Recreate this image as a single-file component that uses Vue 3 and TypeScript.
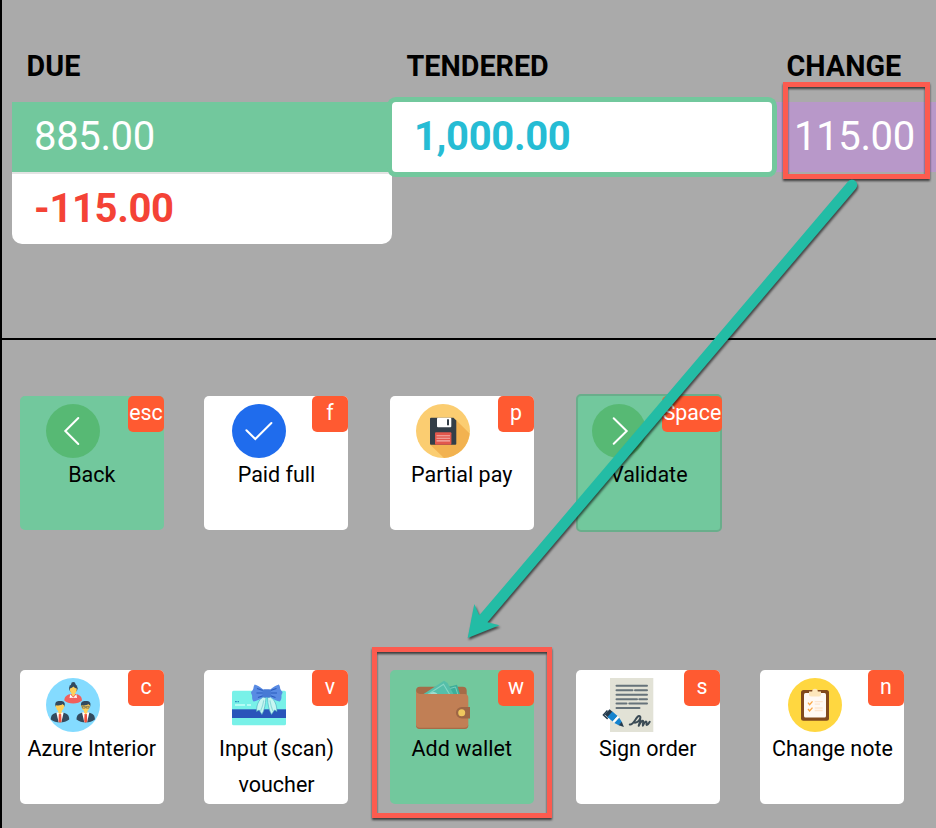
<script setup lang="ts">
type Icon = 'back' | 'check' | 'floppy' | 'next' | 'people' | 'voucher' | 'wallet' | 'sign' | 'note'

interface Action {
  label: string
  hotkey: string
  icon: Icon
  green?: boolean
  focused?: boolean
  shifted?: boolean
}

const rows: Action[][] = [
  [
    { label: 'Back', hotkey: 'esc', icon: 'back', green: true },
    { label: 'Paid full', hotkey: 'f', icon: 'check', shifted: true },
    { label: 'Partial pay', hotkey: 'p', icon: 'floppy' },
    { label: 'Validate', hotkey: 'Space', icon: 'next', green: true, focused: true },
  ],
  [
    { label: 'Azure Interior', hotkey: 'c', icon: 'people' },
    { label: 'Input (scan) voucher', hotkey: 'v', icon: 'voucher', shifted: true },
    { label: 'Add wallet', hotkey: 'w', icon: 'wallet', green: true },
    { label: 'Sign order', hotkey: 's', icon: 'sign' },
    { label: 'Change note', hotkey: 'n', icon: 'note', shifted: true },
  ],
]
</script>

<template>
  <main class="screen">
    <section class="summary">
      <div class="col">
        <h2>DUE</h2>
        <div class="cell due">885.00</div>
        <div class="cell remaining">-115.00</div>
      </div>
      <div class="col">
        <h2>TENDERED</h2>
        <div class="cell tendered">1,000.00</div>
      </div>
      <div class="col last">
        <h2>CHANGE</h2>
        <div class="cell change">115.00</div>
      </div>
    </section>

    <section class="actions">
      <div v-for="(row, r) in rows" :key="r" class="row">
        <button
          v-for="a in row"
          :key="a.label"
          type="button"
          class="card"
          :class="{ green: a.green, focused: a.focused, shifted: a.shifted }"
        >
          <svg class="icon" viewBox="0 0 54 54">
            <g v-if="a.icon === 'back'">
              <circle cx="27" cy="27" r="27" fill="#57b974" />
              <path d="M32.3 14 19.3 27 32.3 40" class="stroke" />
            </g>
            <g v-else-if="a.icon === 'next'">
              <circle cx="27" cy="27" r="27" fill="#57b974" />
              <path d="M21.7 14.3 34.7 27 21.7 39.7" class="stroke" />
            </g>
            <g v-else-if="a.icon === 'check'">
              <circle cx="27" cy="27" r="27" fill="#1f6ced" />
              <path d="M14.4 26.2 23.3 35 39.4 19" class="stroke" />
            </g>
            <g v-else-if="a.icon === 'floppy'">
              <circle cx="27" cy="27" r="27" fill="#fbcd71" />
              <path d="M40 16 53.6 29.6A27 27 0 0 1 28 54L14 40.5Z" fill="#f2b250" />
              <path d="M15 13.7H37.5L40.3 16.5V39.7a1 1 0 0 1-1 1H15a1 1 0 0 1-1-1V14.700a1 1 0 0 1 1-1Z" fill="#333e48" />
              <rect x="21" y="13.700" width="14.300" height="9.600" rx="1" fill="#fff" />
              <rect x="31" y="15.300" width="2" height="6" fill="#333e48" />
              <rect x="19" y="28.300" width="16.400" height="12.400" rx="1" fill="#e2574c" />
              <path d="M20.500 31.700H34M20.500 34.200H34M20.500 36.900H34" stroke="#f3b3ac" stroke-width="1.100" />
            </g>
            <g v-else-if="a.icon === 'people'">
              <circle cx="27" cy="27" r="27" fill="#84dbff" />
              <circle cx="27.300" cy="6.200" r="2.200" fill="#324a5e" />
              <circle cx="27.300" cy="10.300" r="4.300" fill="#324a5e" />
              <path d="M18.300 22.500c.2-4.600 3.600-6 6.700-6.500h4.600c3 .5 6.300 1.900 6.400 6.500-2.200 2-5 2.900-8.800 2.900s-6.900-1-8.900-2.900Z" fill="#f1605d" />
              <path d="M24.200 16.200 27.300 19.700 30.400 16.200 31 20 27.300 19.400 23.600 20Z" fill="#fff" />
              <path d="M23.800 10.500c1.500-.3 2.600-1 3.500-2 1 1 2 1.700 3.500 2 0 2.500-.8 4.200-1.900 5.200v1.400l-1.600 1.500-1.600-1.500v-1.400c-1.100-1-1.900-2.700-1.900-5.200Z" fill="#ffd05b" />
              <g v-for="x in [14, 39.700]" :key="x" :transform="`translate(${x} 0)`">
                <path d="M-9.200 41.500c0-4.600 2-5.700 6.200-7H3c4.200 1.300 6.200 2.400 6.200 7C6.700 43.500 3.600 44.400 0 44.400s-6.700-.9-9.200-2.900Z" fill="#324a5e" />
                <path d="M-3.700 34.200H3.700L1.400 44.200H-1.400Z" fill="#fff" />
                <path d="M-1.200 36H1.200L1.500 43.500 0 44.700-1.500 43.500Z" fill="#f1543f" />
                <path d="M-4.500 28.500c-1.100-5 1.700-5.700 4.700-5.600 3.500 0 5.400 1.200 4.300 5.600Z" fill="#324a5e" />
                <path d="M-4 27.200c2.600.4 5.300.2 6.600-1.200.4.700.9 1 1.400 1.200.8.300.4 1.900-.2 2.100-.3 1.700-1.200 3-2.100 3.700v1.500L0 36.500l-1.700-2V33c-1-.7-1.900-2-2.200-3.700-.7-.3-.9-1.800-.1-2.100Z" fill="#ffd05b" />
                <path v-if="x > 30" d="M-3.500 28.300H-.5V30.100H-3.300ZM.5 28.300H3.500L3.300 30.100H.5Z" fill="none" stroke="#59604f" stroke-width=".7" />
              </g>
            </g>
            <g v-else-if="a.icon === 'voucher'">
              <rect y="12.700" width="54" height="34.500" rx="1.500" fill="#78f1e8" />
              <rect y="31.300" width="54" height="8.700" fill="#2955ba" />
              <path d="M3 23.700H4.800M5.500 23.700H7" stroke="#2e93c0" stroke-width="1.300" />
              <path d="M3 27H13M15 27H19" stroke="#c9fff9" stroke-width="1.500" />
              <path d="M31 19c-4.500 3-6.500 8-6.500 14.500l2.600-1.500 2.800 4.500c2.700-4.600 3.500-10 4.100-17ZM38.500 19c4.300 3 6.300 8 6.500 14.500l-2.500-1.500-3 4.500c-2.600-4.600-3.800-10-4-17Z" fill="#c7f6f2" stroke="#45a6bd" stroke-width=".6" />
              <path d="M28.500 33.300c1.800-3.800 2.700-7.500 3.300-11M41 33.300c-1.700-3.800-2.500-7.500-3.100-11" fill="none" stroke="#8fdad9" stroke-width="1.100" />
              <path d="M31.500 11.700C28 8.700 25.300 7.200 22.700 6.500c-1.600 2.200-.7 3.600-2 5.500-.5 1.200-1.900 1.700-1.700 2.700.4 1.600 1.300 2.200 1.100 4.200 0 2.200.5 3.400 1.500 4.700 3.200-.8 6.500-1.900 10.300-5.100ZM38 11.700c3.500-3 6.300-4.700 8.900-5.300 1.600 2 .7 3.700 2 5.500.5 1.100 1.900 1.700 1.700 2.700-.5 1.600-1.400 2.200-1.100 4.200 0 2.200-.6 3.600-1.600 4.800-3.200-.8-6.400-1.900-10.200-5.100Z" fill="#598be3" />
              <path d="M31 12.500 25 10.500M31 15 24.500 15M31 17.700 26 19.500M38.500 12.500 44.500 10.500M38.500 15H45M38.500 17.700 43.500 19.500" stroke="#2b5cbd" stroke-width="1.200" />
              <rect x="30.500" y="11.200" width="8.500" height="8.200" rx="1.600" fill="#477ad5" />
            </g>
            <g v-else-if="a.icon === 'wallet'">
              <rect y="8.700" width="50.700" height="20" rx="4" fill="#a56c48" />
              <path d="M30 9.500 41 6.700 44.300 17H31Z" fill="#3cae9a" />
              <path d="M34 10.500 39.500 9 42 17" fill="none" stroke="#77cfbd" stroke-width="1" />
              <path d="M6 17 28 2.700 31.500 5 38 17Z" fill="#55bfa9" />
              <path d="M11 17 27.500 6.300 34 17" fill="none" stroke="#86d5c4" stroke-width="1.100" />
              <path d="M13.500 17c.8-3.700 6.600-4.300 8.600 0Z" fill="#a0ded0" />
              <path d="M0 12c.3 2.700 2 4 5 4H48.500a3.800 3.800 0 0 1 3.800 3.800V47a4 4 0 0 1-4 4H4a4 4 0 0 1-4-4Z" fill="#c17f55" />
              <path d="M0 46.500a4 4 0 0 0 4 3.200H48.300a4 4 0 0 0 4-3.200V47a4 4 0 0 1-4 4H4a4 4 0 0 1-4-4Z" fill="#a66b48" />
              <path d="M54 29V40.500H45.700a5.750 5.750 0 0 1 0-11.500Z" fill="#9d6645" />
              <circle cx="45.700" cy="34.700" r="3.500" fill="#efc75e" />
            </g>
            <g v-else-if="a.icon === 'sign'">
              <rect x="8" width="43.300" height="54" fill="#e2e2d6" />
              <path
                d="M14.500 7.700H45M14.500 12.300H30.500M33 12.300H45M14.500 16.700H45M14.500 21.200H35M37.300 21.200H45M14.500 25.500H24.500M27.300 25.500H45M14.500 30H37.500"
                stroke="#66737a" stroke-width="2" stroke-linecap="round"
              />
              <g transform="translate(5.300 33.800) rotate(42)">
                <path d="M0-3.400H5V3.800H0Z" fill="#253b4d" />
                <path d="M3.500-3.700H10.500V3.700H3.500Z" fill="#1583ce" />
                <path d="M10.500-3.700H12.800V3.700H10.500Z" fill="#fff" />
                <path d="M12.800-3.600 18-2V2.200L12.800 3.600Z" fill="#1583ce" />
                <path d="M17.500-2.300 22.500.2 17.500 2.300Z" fill="#253b4d" />
                <path d="M-.7-1V5H5" fill="none" stroke="#253b4d" stroke-width="1.500" />
              </g>
              <path d="M27.800 46.500c2.500.7 5-4 6.700-6.400 1.500-2.200 3.700-3 3.900-.8.100 2-2.500 5.700-6 5.300M38.300 39.500c.3 2.700-.8 6.300-1.600 8.300 1.500-2.500 2.700-5 4-5 1.400.2-.2 3.600.2 4.800 1-2 2.300-4.300 3.400-4 1.100.3-.6 3.300.6 3.500 1.100 0 1.700-1.400 2.800-3.300" fill="none" stroke="#3b4b55" stroke-width="2" stroke-linecap="round" stroke-linejoin="round" />
            </g>
            <g v-else>
              <circle cx="27" cy="27" r="27" fill="#ffd740" />
              <rect x="13" y="12" width="28" height="30.800" rx="2.500" fill="#81491d" />
              <rect x="16" y="15" width="22" height="24.500" rx="1.500" fill="#fff9f4" />
              <path d="M21 13.500h3.200a2.800 2.800 0 0 1 5.600 0H33v3a2 2 0 0 1-2 2H23a2 2 0 0 1-2-2Z" fill="#fde6bb" />
              <path d="M20 24.700 21.600 26.700 24.500 23.300M20 31 21.600 33 24.500 29.600" fill="none" stroke="#f9a646" stroke-width="1.300" />
              <path d="M26.700 23.700H34.700M26.700 26.200H32M26.700 30H34.700M26.700 32.500H34.700" stroke="#fde6d0" stroke-width="1.300" />
            </g>
          </svg>
          <span class="label">{{ a.label }}</span>
          <span class="hotkey">{{ a.hotkey }}</span>
        </button>
      </div>
    </section>

    <div class="highlight change-mark"></div>
    <div class="highlight wallet-mark"></div>
    <svg class="arrow" viewBox="0 0 936 828">
      <path d="M848 181.600A5.250 5.250 0 0 1 856 188.400L487.500 622.300 499.500 625.300 467.700 638 474.300 604 479.300 615.300Z" fill="#23bca5" />
    </svg>
  </main>
</template>

<style>
body {
  margin: 0;
}
</style>

<style scoped>
.screen {
  position: relative;
  box-sizing: border-box;
  width: 936px;
  height: 828px;
  overflow: hidden;
  border-left: 2px solid #000;
  background: #aaa;
  color: #000;
  font-family: Roboto, sans-serif;
}

.summary {
  display: flex;
  box-sizing: border-box;
  height: 340px;
  padding: 48px 0 0 10px;
  border-bottom: 2px solid #000;
}

.col {
  flex: 0 0 380px;
}

.col.last {
  flex: 1;
}

h2 {
  box-sizing: border-box;
  margin: 0;
  padding: 0 0 0 14.600px;
  height: 54px;
  font-size: 28.700px;
  line-height: 36px;
  font-weight: 700;
}

.cell {
  box-sizing: border-box;
  height: 70px;
  padding-left: 22px;
  font-size: 40px;
  line-height: 70px;
  letter-spacing: -0.35px;
}

.due {
  background: #72c89d;
  color: #fff;
}

.remaining {
  height: 72px;
  border-top: 2px solid #e3e3e3;
  border-radius: 0 0 10px 10px;
  background: #fff;
  color: #f44336;
  font-weight: 700;
}

.tendered {
  position: relative;
  border-radius: 4px;
  background: #fff;
  box-shadow: 0 0 0 5px #72c89d;
  color: #26bcd4;
  font-weight: 700;
}

.change {
  background: #b898c9;
  color: #fff;
}

.actions {
  display: flex;
  flex-direction: column;
  gap: 140px;
  padding: 56px 0 0 18px;
}

.row {
  display: grid;
  grid-template-columns: 184px 186px 186px 184px 144px;
  height: 134px;
}

.card {
  position: relative;
  display: flex;
  flex-direction: column;
  box-sizing: border-box;
  width: 144px;
  height: 134px;
  padding: 8px 0 0;
  border: 0;
  border-radius: 5px;
  background: #fff;
  color: #000;
  font: inherit;
}

.card.green {
  background: #72c89d;
}

.card.focused {
  width: 146px;
  height: 138px;
  margin-top: -2px;
  border: 2px solid #69ae8b;
}

.icon {
  display: block;
  flex: none;
  width: 54px;
  height: 54px;
  margin-left: 26px;
}

.shifted .icon {
  margin-left: 28px;
}

.focused .icon {
  margin-left: 14px;
}

.stroke {
  fill: none;
  stroke: #fff;
  stroke-width: 2;
  stroke-linecap: round;
}

.label {
  margin-top: -1px;
  padding-right: 0.5px;
  font-size: 21.500px;
  line-height: 36px;
  text-align: center;
}

.shifted .label {
  padding: 0 0 0 1px;
}

.hotkey {
  position: absolute;
  top: 0;
  right: 0;
  box-sizing: border-box;
  min-width: 36px;
  height: 36px;
  border-radius: 5px;
  background: #ff5a31;
  color: #fff;
  font-size: 21.300px;
  line-height: 34px;
  text-align: center;
}

.focused .hotkey {
  right: -2px;
  width: 60px;
}

.highlight {
  position: absolute;
  box-sizing: border-box;
  border: 5px solid #fc5b4f;
  filter: drop-shadow(0 2px 1px rgba(0, 0, 0, 0.65));
}

.change-mark {
  left: 781px;
  top: 82px;
  width: 147px;
  height: 97px;
}

.wallet-mark {
  left: 370px;
  top: 647px;
  width: 180px;
  height: 171px;
}

.arrow {
  position: absolute;
  left: -2px;
  top: 0;
  width: 936px;
  height: 828px;
  filter: drop-shadow(1px 2px 1px rgba(0, 0, 0, 0.6));
  pointer-events: none;
}
</style>
